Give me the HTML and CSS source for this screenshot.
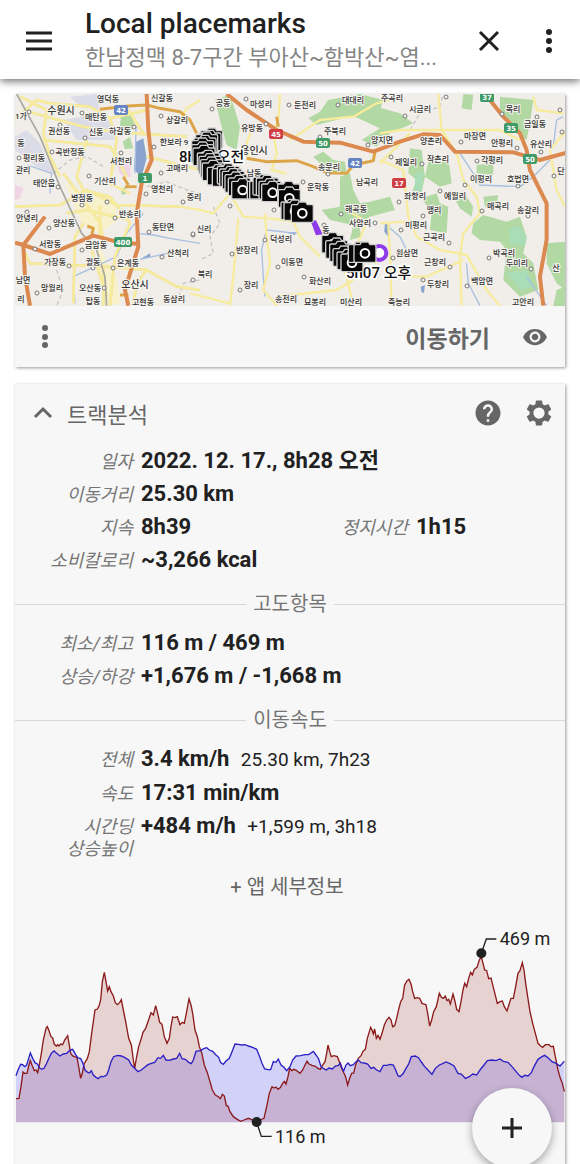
FILE: index.html
```html
<!DOCTYPE html>
<html lang="ko">
<head>
    <meta charset="UTF-8">
    <meta name="viewport" content="width=device-width, initial-scale=1.0">
    <title>Local placemarks</title>
    <link rel="stylesheet" href="styles.css">
</head>
<body>
    <header class="topbar">
        <button class="icon-btn" aria-label="Menu">
            <svg width="28" height="28" viewBox="0 0 28 28"><path d="M1 6H27M1 14H27M1 22H27" stroke="#212121" stroke-width="3"/></svg>
        </button>
        <div class="titles">
            <h1>Local placemarks</h1>
            <p>한남정맥 8-7구간 부아산~함박산~염...</p>
        </div>
        <button class="icon-btn" aria-label="Close">
            <svg width="28" height="28" viewBox="0 0 28 28"><path d="M5 5L23 23M23 5L5 23" stroke="#212121" stroke-width="3"/></svg>
        </button>
        <button class="icon-btn" aria-label="More">
            <svg width="28" height="28" viewBox="0 0 28 28" fill="#212121"><circle cx="14" cy="5" r="3"/><circle cx="14" cy="14" r="3"/><circle cx="14" cy="23" r="3"/></svg>
        </button>
    </header>

    <main>
        <section class="card">
            <svg class="map" viewBox="15 94 550 212" role="img" aria-label="Map">
                <defs>
                    <g id="camera">
                        <path d="M-33-22Q-33-26-29-26H-15L-10-34H10L15-26H29Q33-26 33-22V23Q33 27 29 27H-29Q-33 27-33 23Z" fill="#080808" stroke="#d0d0d0" stroke-width="4"/>
                        <circle r="13" fill="none" stroke="#fff" stroke-width="6"/>
                    </g>
                </defs>
                <rect x="15" y="94" width="550" height="212" fill="#f1eeea"/>
                <!-- drawn at three units per pixel -->
                <g transform="translate(0 90) scale(.3333)">
                    <g fill="#dcdce8">
                        <path d="M45 140L80 120L120 160L160 250L110 230L45 180Z"/>
                        <path d="M190 90L300 70L370 130L340 150L230 150Z"/>
                        <path d="M210 20L290 12L300 60L240 50Z"/>
                    </g>
                    <g fill="#f1d3e6">
                        <path d="M350 225L390 215L392 262L362 255Z"/>
                        <path d="M45 285L70 295L60 325L45 330Z"/>
                    </g>
                    <g fill="#f8f2cc">
                        <path d="M195 280L235 300L300 310L345 330L350 390L300 430L245 400L225 350Z"/>
                        <path d="M290 440L320 520L350 560L360 640L320 647L300 550Z"/>
                    </g>
                    <g fill="#b2d9a4">
                        <path d="M365 55L395 70L405 110L375 135L360 105Z"/>
                        <path d="M368 155L390 140L400 175L375 178Z"/>
                        <path d="M362 298L376 290L380 310L366 316Z"/>
                        <path d="M645 30L690 14L705 60L720 110L710 180L680 165L665 110Z"/>
                        <path d="M985 30L1080 12L1150 30L1140 60L1030 85L950 105L925 85L960 65Z"/>
                        <path d="M1020 60L1090 40L1200 70L1240 100L1170 130L1130 170L1085 150L1140 115Z"/>
                        <path d="M940 200L970 185L1000 210L1035 215L1040 255L990 250L965 225Z"/>
                        <path d="M1020 260L1050 250L1060 300L1080 340L1110 335L1170 320L1185 360L1110 380L1075 400L1085 440L1050 450L1060 405L990 390L965 360L1020 350Z"/>
                        <path d="M1140 330L1170 325L1165 345L1140 355Z"/>
                        <path d="M1230 175L1265 180L1275 260L1260 330L1235 310L1250 270L1225 250Z"/>
                        <path d="M1290 195L1345 200L1355 280L1320 290L1275 260Z"/>
                        <path d="M1265 325L1310 310L1320 340L1345 350L1340 430L1290 420L1295 370Z"/>
                        <path d="M1355 310L1390 305L1420 350L1415 380L1380 355Z"/>
                        <path d="M1390 12L1420 14L1415 60L1385 55Z"/>
                        <path d="M1500 20L1600 30L1590 100L1580 150L1550 130L1530 100L1500 60Z"/>
                        <path d="M1430 225L1480 220L1480 255L1430 250Z"/>
                        <path d="M1420 400L1450 375L1520 395L1560 380L1580 440L1570 490L1600 520L1615 600L1560 620L1510 570L1520 480L1500 455L1440 450L1415 430Z"/>
                        <path d="M1450 320L1495 315L1490 350L1455 350Z"/>
                        <path d="M1640 460L1695 455V600L1670 580L1640 520Z"/>
                        <path d="M1670 600L1695 590V648H1660Z"/>
                    </g>
                    <g fill="#a9ddb8">
                        <path d="M1530 420Q1550 390 1580 440L1575 470L1530 460Z"/>
                        <path d="M1245 250L1270 245L1265 310L1245 310Z"/>
                        <path d="M1520 550L1580 540L1600 590L1560 600Z"/>
                    </g>
                    <g fill="#89a5cf">
                        <path d="M408 155L430 145L440 205L425 260L402 240Z"/>
                        <path d="M420 508L450 490L452 500Z"/>
                        <path d="M1155 400L1170 405L1165 440L1153 425Z"/>
                        <path d="M1262 590L1275 585L1272 610L1264 605Z"/>
                        <path d="M860 428L890 426L885 435Z"/>
                    </g>
                    <g class="water">
                        <path d="M82 225L155 250L150 310"/>
                        <path d="M408 110L405 250M430 370L380 430L350 500L220 560L225 640"/>
                        <path d="M410 430L460 435L510 445L600 460M420 508L550 480"/>
                        <path d="M800 415L785 480L790 560L795 620M800 420L890 430"/>
                        <path d="M1165 410L1200 440L1230 500M1380 190L1420 250L1440 285L1560 290L1600 260L1650 210M1660 170L1670 90L1690 80"/>
                        <path d="M1400 520L1405 580L1440 647M1580 560L1640 647"/>
                    </g>
                    <g class="border">
                        <path d="M160 250L210 210L260 200L310 230M440 290L500 275L560 300L600 310M640 350L660 400L630 440L640 490L600 510M530 640L550 580L600 570M170 540L190 600L170 647M1230 120L1260 70L1320 50L1330 12"/>
                    </g>
                    <g class="road-casing">
                        <path d="M45 90L110 30L150 40L270 50L330 85L440 60M60 20L140 60L130 130L150 200L180 260M85 65L250 110L300 120L400 130L560 140"/>
                        <path d="M130 150L330 170L350 200L380 260M260 150L230 260L250 300L330 320M330 85L350 150L330 280L390 310"/>
                        <path d="M45 350L180 345L260 300L350 345L540 350M190 250L250 330L300 400L310 450M200 370L260 360L390 390M300 345L300 440M330 320L390 400L345 500L330 647"/>
                        <path d="M220 640L225 440L250 400M70 480L90 520L320 530L440 540L530 590L600 600M310 530L310 647M265 450L320 620"/>
                        <path d="M385 60L410 100L430 130M440 200L520 220L600 240M400 640L410 580L440 540"/>
                    </g>
                    <g class="road-yellow">
                        <path d="M45 90L110 30L150 40L270 50L330 85L440 60M60 20L140 60L130 130L150 200L180 260M85 65L250 110L300 120L400 130L560 140"/>
                        <path d="M130 150L330 170L350 200L380 260M260 150L230 260L250 300L330 320M330 85L350 150L330 280L390 310"/>
                        <path d="M45 350L180 345L260 300L350 345L540 350M190 250L250 330L300 400L310 450M200 370L260 360L390 390M300 345L300 440M330 320L390 400L345 500L330 647"/>
                        <path d="M220 640L225 440L250 400M70 480L90 520L320 530L440 540L530 590L600 600M310 530L310 647M265 450L320 620"/>
                        <path d="M385 60L410 100L430 130M440 200L520 220L600 240M400 640L410 580L440 540"/>
                        <path d="M840 12L835 90L820 130L830 190L815 240L860 250M760 105L740 160L745 200M870 150L960 90L1060 80L1130 40L1210 20M690 310L730 380L810 385L880 395L900 440L960 500M715 385L700 560L690 647M795 370L800 440L810 520L790 600L830 647M830 620L1010 600L1060 570M690 640L570 610"/>
                        <path d="M1040 360L1100 395L1070 470L1130 520M1140 210L1210 240L1225 380L1250 440L1320 480L1400 495L1460 600L1500 647M1380 500L1385 647M1170 560L1280 560L1390 510M1315 12L1325 120L1370 190L1390 270L1430 320L1440 370L1390 430L1380 500M1140 130L1200 120L1500 120L1560 150M1165 400L1170 490L1175 647M1140 220L1230 130M1700 120L1650 180L1670 300L1695 350M1600 20L1610 60L1690 70M1140 400L1215 395"/>
                        <path d="M540 350L600 360L640 370L690 310M600 30L560 55L540 90M1010 500L1040 560L1060 647"/>
                    </g>
                    <path d="M50 12L120 140L180 290L245 430L290 480L315 560L320 647" class="rail"/>
                    <g class="road-amber">
                        <path d="M300 58L385 48L440 45L480 55L540 65L570 90L590 130M740 205L800 215L890 212L940 230L980 248L1040 250L1060 225L1120 212L1125 185M830 80L835 110M375 290H410M262 408L280 415L275 435M370 260L385 285M360 615H385"/>
                    </g>
                    <g class="road-orange">
                        <path d="M440 12L445 120L455 210L425 280L410 370L415 470L390 550L375 600L385 647"/>
                        <path d="M45 458L70 465L150 492L280 437L350 455L415 462M70 465L135 380M70 465L75 560L90 647"/>
                        <path d="M680 12L740 60L830 120L910 155L1020 158L1120 185L1200 155L1270 133L1320 135L1365 185L1540 187L1620 210L1700 188"/>
                        <path d="M1470 30L1510 80L1560 130L1580 180L1590 240L1640 340L1640 450L1620 560L1630 647"/>
                    </g>
                </g>
                <g id="places" class="places"></g>
                <g id="shields" class="shields"></g>
                <text x="179" y="162" class="stamp">8h28 오전</text>
                <text x="346" y="278" class="stamp">5h07 오후</text>
                <g transform="translate(190 90) scale(.3333)">
                    <path d="M362 393L378 391L398 433L378 436Z" fill="#8e3bea"/>
                    <circle cx="568" cy="489" r="21" fill="#fff" stroke="#8e3bea" stroke-width="12"/>
                </g>
                <g id="photos" transform="translate(190 90) scale(.3333)"></g>
            </svg>
            <div class="card-actions">
                <button class="icon-btn" aria-label="More">
                    <svg width="28" height="28" viewBox="0 0 28 28" fill="#666"><circle cx="14" cy="5" r="3"/><circle cx="14" cy="14" r="3"/><circle cx="14" cy="22" r="3"/></svg>
                </button>
                <button class="go-btn">이동하기</button>
                <button class="icon-btn" aria-label="Show">
                    <svg width="26" height="26" viewBox="0 0 24 24" fill="#666"><path d="M12 4.500C7 4.500 2.730 7.610 1 12c1.730 4.390 6 7.500 11 7.500s9.270-3.110 11-7.500c-1.730-4.390-6-7.500-11-7.500zM12 17c-2.760 0-5-2.240-5-5s2.240-5 5-5 5 2.240 5 5-2.240 5-5 5zm0-8c-1.660 0-3 1.340-3 3s1.340 3 3 3 3-1.340 3-3-1.340-3-3-3z"/></svg>
                </button>
            </div>
        </section>

        <section class="card analysis">
            <div class="card-head">
                <button class="collapse-btn">
                    <svg width="20" height="20" viewBox="0 0 20 20"><path d="M2 14L10 6L18 14" fill="none" stroke="#666" stroke-width="3"/></svg>
                    트랙분석
                </button>
                <button class="icon-btn" aria-label="Help">
                    <svg width="30" height="30" viewBox="0 0 24 24" fill="#666"><path d="M12 2C6.480 2 2 6.480 2 12s4.480 10 10 10 10-4.480 10-10S17.520 2 12 2zm1 17h-2v-2h2v2zm2.070-7.750l-.9.920C13.450 12.900 13 13.500 13 15h-2v-.5c0-1.100.45-2.100 1.170-2.830l1.240-1.260c.37-.36.59-.86.59-1.410 0-1.100-.9-2-2-2s-2 .9-2 2H8c0-2.210 1.790-4 4-4s4 1.790 4 4c0 .88-.36 1.680-.93 2.250z"/></svg>
                </button>
                <button class="icon-btn" aria-label="Settings">
                    <svg width="30" height="30" viewBox="0 0 24 24" fill="#666"><path fill-rule="evenodd" d="M19.430 12.980c.04-.32.07-.64.07-.98s-.03-.66-.07-.98l2.110-1.650c.19-.15.24-.42.12-.64l-2-3.460c-.12-.22-.39-.3-.61-.22l-2.490 1c-.52-.4-1.080-.73-1.690-.98l-.38-2.650C14.460 2.180 14.250 2 14 2h-4c-.25 0-.46.18-.49.420l-.38 2.650c-.61.25-1.170.59-1.690.98l-2.490-1c-.23-.09-.49 0-.61.220l-2 3.460c-.13.22-.07.49.12.640l2.110 1.650c-.04.32-.07.65-.07.980s.03.66.07.980l-2.110 1.650c-.19.15-.24.42-.12.640l2 3.460c.12.22.39.3.61.220l2.490-1c.52.4 1.080.73 1.690.98l.38 2.650c.03.24.24.42.49.420h4c.25 0 .46-.18.49-.420l.38-2.650c.61-.25 1.170-.59 1.690-.98l2.490 1c.23.09.49 0 .61-.220l2-3.460c.12-.22.07-.49-.12-.640l-2.110-1.650zM12 16.500a4.500 4.500 0 1 1 0-9 4.500 4.500 0 0 1 0 9z"/></svg>
                </button>
            </div>

            <dl class="stats">
                <div class="wide"><dt>일자</dt><dd>2022. 12. 17., 8h28 오전</dd></div>
                <div class="wide"><dt>이동거리</dt><dd>25.30 km</dd></div>
                <div><dt>지속</dt><dd>8h39</dd></div>
                <div><dt>정지시간</dt><dd>1h15</dd></div>
                <div class="wide"><dt>소비칼로리</dt><dd>~3,266 kcal</dd></div>
            </dl>

            <h2 class="divider">고도항목</h2>
            <dl class="stats">
                <div class="wide"><dt>최소/최고</dt><dd>116 m / 469 m</dd></div>
                <div class="wide"><dt>상승/하강</dt><dd>+1,676 m / -1,668 m</dd></div>
            </dl>

            <h2 class="divider">이동속도</h2>
            <dl class="stats">
                <div class="wide"><dt>전체</dt><dd>3.4 km/h <small>25.30 km, 7h23</small></dd></div>
                <div class="wide"><dt>속도</dt><dd>17:31 min/km</dd></div>
                <div class="wide"><dt>시간딩<br>상승높이</dt><dd>+484 m/h <small>+1,599 m, 3h18</small></dd></div>
            </dl>

            <button class="details-btn">+ 앱 세부정보</button>

            <svg class="chart" viewBox="45 0 1650 762" role="img" aria-label="Elevation and speed">
                <path id="speedArea" fill="#0000ff" fill-opacity=".15"/>
                <path id="elevationArea" fill="#8b0000" fill-opacity=".15"/>
                <path id="elevationLine" fill="none" stroke="#8b1a1a" stroke-width="4"/>
                <path id="speedLine" fill="none" stroke="#2a1fc4" stroke-width="4"/>
                <path d="M1444 130L1459 87H1489M770 636L784 679H815" fill="none" stroke="#212121" stroke-width="4"/>
                <circle cx="1444" cy="130" r="15" fill="#212121"/>
                <circle cx="770" cy="636" r="15" fill="#212121"/>
                <text x="1499" y="106">469 m</text>
                <text x="825" y="698">116 m</text>
            </svg>
        </section>
    </main>

    <button class="fab" aria-label="Add">
        <svg width="24" height="24" viewBox="0 0 24 24"><path d="M12 2V22M2 12H22" stroke="#212121" stroke-width="3"/></svg>
    </button>

    <script src="script.js"></script>
</body>
</html>
```
FILE: styles.css
```css
* {
    box-sizing: border-box;
}
body {
    margin: 0;
    min-height: 100vh;
    display: flex;
    flex-direction: column;
    background-color: #ffffff;
    color: #212121;
    font-family: Roboto, "Noto Sans CJK KR", sans-serif;
}
button {
    padding: 0;
    border: none;
    background: none;
    color: #666666;
    font-family: inherit;
    cursor: pointer;
}
h1, h2, p, dl, dd {
    margin: 0;
}
.topbar {
    display: flex;
    align-items: center;
    height: 79px;
    padding: 2px 17px 0 25px;
    background-color: #ffffff;
    box-shadow: 0 2px 8px rgba(0, 0, 0, 0.6);
}
.icon-btn {
    display: flex;
    flex-shrink: 0;
}
.titles {
    flex: 1;
    min-width: 0;
    margin-left: 32px;
}
.titles h1 {
    font-size: 28px;
    font-weight: 500;
    line-height: 34px;
}
.titles p {
    overflow: hidden;
    white-space: nowrap;
    text-overflow: ellipsis;
    color: #858585;
    font-size: 22px;
    line-height: 33px;
}
.topbar .icon-btn + .icon-btn {
    margin-left: 32px;
}
main {
    flex: 1;
    display: flex;
    flex-direction: column;
    gap: 17px;
    padding: 15px 15px 0;
}
.card {
    background-color: #f7f7f7;
    box-shadow: 1px 1px 3px rgba(0, 0, 0, 0.4);
}
.analysis {
    flex: 1;
}

/* map */
.map {
    display: block;
    width: 100%;
}
.map path {
    stroke-linejoin: round;
}
.water path {
    fill: none;
    stroke: #a9bfe0;
    stroke-width: 4;
}
.border path {
    fill: none;
    stroke: #c9c5c5;
    stroke-width: 4;
    stroke-dasharray: 12 8;
}
.road-casing path {
    fill: none;
    stroke: #e9dc92;
    stroke-width: 8;
}
.road-yellow path {
    fill: none;
    stroke: #f7eb9d;
    stroke-width: 7;
}
.rail {
    fill: none;
    stroke: #a8a8a0;
    stroke-width: 5;
}
.road-amber path {
    fill: none;
    stroke: #dda54a;
    stroke-width: 9;
}
.road-orange path {
    fill: none;
    stroke: #dc8950;
    stroke-width: 12;
}
.places text {
    fill: #333333;
    stroke: #f6f4f0;
    stroke-width: 2px;
    paint-order: stroke;
    font-size: 8px;
    font-weight: 500;
    text-anchor: middle;
}
.places .city {
    font-size: 10px;
}
.places circle {
    fill: #f6f4f0;
    stroke: #777777;
    stroke-width: 1px;
}
.shields text {
    fill: #ffffff;
    font-family: "DejaVu Sans", sans-serif;
    font-size: 7px;
    font-weight: bold;
    text-anchor: middle;
}
.stamp {
    fill: #111111;
    stroke: #ffffff;
    stroke-width: 3px;
    paint-order: stroke;
    font-size: 15px;
    font-weight: 500;
}

.card-actions {
    display: flex;
    align-items: center;
    height: 61px;
    padding: 0 17px 0 16px;
}
.go-btn {
    margin: 0 32px 0 auto;
    font-size: 23px;
    font-weight: bold;
}

/* track analysis */
.card-head {
    display: flex;
    align-items: center;
    gap: 21px;
    height: 58px;
    margin-bottom: 2px;
    padding: 0 11px 0 18px;
}
.collapse-btn {
    display: flex;
    align-items: center;
    gap: 14px;
    margin-right: auto;
    font-size: 22px;
}
.stats {
    display: grid;
    grid-template-columns: 1fr 1fr;
}
.stats div {
    display: flex;
    align-items: baseline;
    gap: 8px;
}
.stats .wide {
    grid-column: 1 / -1;
}
.stats dt {
    width: 118px;
    color: #757575;
    font-size: 18px;
    font-style: italic;
    line-height: 22px;
    text-align: right;
}
.stats dd {
    font-size: 22px;
    font-weight: bold;
    line-height: 33px;
}
.stats small {
    margin-left: 6px;
    font-size: 19px;
    font-weight: normal;
}
.divider {
    display: flex;
    align-items: center;
    gap: 7px;
    margin: 14px 0 8px;
    color: #757575;
    font-size: 20px;
    font-weight: normal;
    line-height: 28px;
}
.divider::before,
.divider::after {
    content: "";
    flex: 1;
    height: 1px;
    background-color: #d8d8d8;
}
.details-btn {
    display: block;
    width: 100%;
    height: 50px;
    padding-right: 6px;
    font-size: 20px;
}
.chart {
    display: block;
    width: 100%;
}
.chart text {
    fill: #212121;
    font-size: 54px;
}
.fab {
    position: fixed;
    right: 28px;
    bottom: -4px;
    display: flex;
    align-items: center;
    justify-content: center;
    width: 80px;
    height: 80px;
    border-radius: 50%;
    background-color: #f7f7f7;
    box-shadow: 0 3px 8px rgba(0, 0, 0, 0.35);
}
```
FILE: script.js
```js
const SVG_NS = 'http://www.w3.org/2000/svg';

function add(parent, tag, attrs, text) {
    const el = document.createElementNS(SVG_NS, tag);
    for (const key in attrs) el.setAttribute(key, attrs[key]);
    if (text) el.textContent = text;
    parent.appendChild(el);
}

// name, x, baseline
const places = [
    ['영덕동', 108, 102], ['신갈동', 162, 101], ['매탄동', 96, 120], ['권선동', 59, 134],
    ['신동', 96, 135], ['하갈동', 120, 134], ['상갈리', 177, 123], ['한보라 9', 174, 145],
    ['동', 21, 146], ['곡반정동', 70, 155], ['평리동', 34, 161], ['관리', 23, 173],
    ['1가', 21, 119], ['서천리', 121, 164], ['기산리', 105, 184], ['태안읍', 44, 186],
    ['영천리', 162, 192], ['병점동', 82, 201], ['고매리', 177, 171], ['중리', 194, 200],
    ['반송리', 130, 217], ['안녕리', 27, 221], ['양산동', 64, 226], ['동탄면', 163, 230],
    ['서랑동', 50, 247], ['금암동', 96, 248], ['산척리', 178, 256], ['가장동', 55, 265],
    ['궐동', 93, 265], ['은계동', 128, 266], ['남면', 23, 283], ['망월리', 52, 291],
    ['오산동', 90, 291], ['탑동', 93, 304], ['고현동', 143, 305], ['동삼리', 174, 302],
    ['리', 21, 302], ['공동', 223, 106], ['마성리', 261, 107], ['둔전리', 305, 108],
    ['대대리', 353, 103], ['주곡리', 392, 101], ['유방동', 252, 131], ['주북리', 335, 134],
    ['양지면', 382, 143], ['송문리', 329, 170], ['남동', 254, 176], ['운학동', 318, 190],
    ['남곡리', 367, 185], ['해곡동', 356, 212], ['사암리', 360, 226], ['신리', 204, 232],
    ['덕성리', 281, 242], ['동', 326, 233], ['반장리', 247, 253], ['이동면', 292, 265],
    ['북리', 205, 277], ['화산리', 320, 284], ['장리', 251, 288], ['송전리', 286, 302],
    ['묘봉리', 315, 305], ['미산리', 351, 305], ['시금리', 420, 112], ['목리', 513, 112],
    ['금일동', 535, 127], ['마장면', 475, 139], ['안평리', 502, 146], ['유산리', 541, 147],
    ['양촌리', 431, 144], ['제일리', 406, 165], ['작촌리', 438, 162], ['각평리', 492, 163],
    ['이평리', 481, 182], ['호법면', 518, 182], ['단', 561, 174], ['좌항리', 415, 199],
    ['예월리', 455, 199], ['맹리', 434, 213], ['매곡리', 498, 209], ['송갈리', 528, 213],
    ['미평리', 416, 228], ['근곡리', 434, 240], ['원삼면', 407, 256], ['박곡리', 504, 256],
    ['두미리', 517, 266], ['근창리', 435, 265], ['두창리', 438, 287], ['백암면', 482, 284],
    ['산', 556, 271], ['죽능리', 399, 305], ['고안리', 523, 305]
];
const cities = [['수원시', 61, 114], ['오산시', 135, 288], ['용인시', 254, 154]];
const dots = [
    [29, 112], [82, 113], [161, 116], [60, 125], [85, 138], [134, 127], [154, 147], [52, 152],
    [19, 158], [121, 153], [89, 176], [58, 187], [161, 173], [146, 194], [107, 202], [183, 202],
    [82, 205], [27, 212], [115, 218], [49, 228], [149, 232], [35, 249], [82, 250], [162, 257],
    [69, 266], [93, 268], [113, 268], [193, 235], [193, 280], [37, 293], [104, 288], [212, 109],
    [246, 99], [289, 105], [338, 105], [266, 124], [320, 137], [368, 145], [328, 174], [303, 182],
    [341, 214], [375, 223], [193, 234], [265, 240], [232, 254], [278, 267], [304, 277], [240, 290],
    [324, 225], [230, 206], [274, 210], [446, 97], [405, 116], [502, 114], [537, 117], [461, 142],
    [517, 148], [541, 152], [391, 157], [422, 164], [477, 161], [465, 185], [518, 186], [554, 176],
    [399, 202], [440, 191], [423, 216], [482, 211], [528, 216], [401, 230], [449, 243], [393, 258],
    [489, 258], [531, 269], [450, 267], [423, 280], [467, 286], [560, 110], [562, 132]
];
const placeLayer = document.getElementById('places');
dots.forEach(([x, y]) => add(placeLayer, 'circle', { cx: x, cy: y, r: 2 }));
places.forEach(([name, x, y]) => add(placeLayer, 'text', { x, y }, name));
cities.forEach(([name, x, y]) => add(placeLayer, 'text', { x, y, class: 'city' }, name));

// road numbers: label, x, y, colour
const shields = [
    ['42', 121, 110, '#6484c2'], ['1', 145, 178, '#409a67'], ['400', 123, 242, '#409a67'],
    ['45', 276, 134, '#cf3e45'], ['50', 323, 143, '#409a67'], ['42', 355, 163, '#6484c2'],
    ['17', 399, 183, '#cf3e45'], ['37', 487, 97, '#409a67'], ['35', 511, 128, '#409a67'],
    ['50', 530, 159, '#409a67']
];
const shieldLayer = document.getElementById('shields');
shields.forEach(([label, x, y, fill]) => {
    const width = label.length > 2 ? 18 : 14;
    add(shieldLayer, 'rect', { x: x - width / 2, y: y - 5, width, height: 10, rx: 2, fill });
    add(shieldLayer, 'text', { x, y: y + 3 }, label);
});

// photo markers along the track
const photos = [
    [65, 148], [60, 155], [50, 160], [45, 170], [38, 178], [38, 190], [42, 200], [55, 215],
    [60, 225], [65, 235], [70, 245], [85, 258], [100, 262], [115, 255], [122, 263], [130, 270],
    [138, 280], [148, 290], [158, 300], [205, 300], [212, 300], [222, 288], [232, 290],
    [240, 300], [248, 308], [296, 308], [298, 325], [306, 362], [315, 364], [337, 370],
    [428, 462], [440, 478], [452, 488], [462, 502], [474, 512], [486, 518], [508, 490], [525, 490]
];
const photoLayer = document.getElementById('photos');
photos.forEach(([x, y]) => add(photoLayer, 'use', { href: '#camera', x, y }));

// profile, three units per pixel
const elevation = `48,566 57,565 63,530 69,486 74,490 81,490 86,468 91,452 97,468 103,482 108,480 113,488
118,465 124,430 130,390 138,355 142,350 147,362 153,380 158,384 163,403 169,408 173,404 177,408 182,402
188,404 194,390 203,377 207,400 212,430 218,438 224,440 231,443 236,470 242,505 247,490 252,462 262,446
268,425 275,370 285,300 292,297 297,288 302,270 307,215 313,187 318,215 323,243 328,230 333,245 340,258
346,278 352,284 359,278 364,269 370,300 378,340 386,385 394,405 400,450 404,475 410,440 416,410 424,385
429,367 437,355 444,335 453,308 460,315 467,287 473,310 479,337 486,343 493,380 501,400 508,385 513,350
518,321 525,323 532,320 540,344 547,337 553,340 559,310 567,267 573,285 578,310 585,360 592,380 598,410
605,428 613,465 622,488 630,515 637,540 646,555 655,560 661,566 667,553 673,558 679,587 684,588 690,605
700,620 712,628 722,634 732,630 745,625 758,630 770,636 780,630 792,625 800,590 808,550 816,530 822,534
828,531 834,538 841,533 848,520 853,514 858,522 864,500 869,475 875,482 882,478 890,482 900,490 908,480
915,465 921,454 927,462 936,466 946,469 954,475 961,478 968,465 975,455 980,430 984,405 989,425 994,440
1002,437 1012,440 1018,455 1023,470 1029,484 1036,498 1043,525 1049,505 1055,490 1061,489 1067,465
1075,445 1083,437 1089,424 1096,418 1102,385 1112,352 1116,360 1120,372 1124,357 1129,385 1134,376
1140,388 1146,370 1153,345 1160,330 1167,322 1173,330 1178,350 1184,347 1190,325 1196,298 1202,275
1208,265 1214,225 1221,213 1227,208 1233,222 1238,245 1244,265 1252,263 1259,265 1266,280 1278,284
1283,310 1289,348 1295,330 1301,305 1309,290 1318,250 1324,262 1330,265 1336,258 1341,272 1346,268
1351,282 1359,252 1364,270 1370,298 1377,305 1383,275 1389,240 1394,220 1400,230 1406,205 1412,187
1417,195 1423,178 1431,172 1438,150 1444,140 1449,160 1454,180 1460,182 1466,206 1473,204 1480,232
1487,260 1492,280 1500,275 1507,273 1513,290 1521,303 1528,280 1533,265 1540,265 1546,235 1554,190
1560,182 1567,158 1572,180 1577,220 1583,260 1590,305 1598,340 1606,370 1614,400 1622,408 1628,412
1636,404 1647,404 1653,410 1660,409 1666,440 1674,480 1681,505 1687,520 1693,545`;

const speed = `48,497 54,480 62,463 68,464 74,470 80,465 86,445 91,429 98,445 105,458 112,462 119,474
126,478 132,475 139,462 146,446 154,430 162,423 170,430 180,438 190,432 200,430 210,420 218,418 227,434
234,444 242,446 249,460 255,480 263,487 269,488 274,482 280,495 288,502 295,506 302,499 311,500 320,495
326,480 333,455 341,440 352,436 364,438 375,443 386,450 394,465 404,475 414,485 424,480 434,472 444,464
454,460 464,457 474,443 482,445 490,436 498,450 508,451 520,447 530,445 539,430 546,446 556,448 566,457
574,461 580,450 588,424 600,422 613,415 620,413 628,420 638,424 648,435 656,442 662,458 670,463 678,453
688,445 696,425 705,402 715,403 725,405 735,404 745,408 758,412 770,418 779,440 786,460 794,477 804,479
812,479 820,455 828,457 835,447 843,465 851,471 860,482 870,470 878,450 888,438 902,437 915,434 926,434
940,424 948,435 956,447 963,470 971,476 979,480 987,474 997,477 1006,468 1015,466 1021,459 1026,474
1031,483 1038,465 1044,459 1051,467 1060,464 1068,455 1075,450 1083,458 1093,459 1103,462 1113,475
1121,472 1130,480 1140,485 1150,466 1160,466 1170,463 1180,465 1186,478 1194,497 1200,500 1210,490
1218,475 1226,462 1234,440 1246,438 1256,444 1264,456 1274,470 1284,480 1296,493 1306,475 1318,465
1328,461 1338,456 1350,461 1362,468 1374,490 1384,492 1396,505 1408,500 1418,492 1430,495 1440,480
1452,465 1462,452 1476,450 1488,452 1500,447 1510,454 1524,457 1536,470 1546,482 1558,496 1566,502
1574,496 1584,498 1594,488 1602,470 1614,448 1626,440 1634,436 1644,443 1656,455 1668,460 1680,468
1687,460 1693,454`;

function drawSeries(points, line, area) {
    const d = 'M' + points;
    document.getElementById(line).setAttribute('d', d);
    document.getElementById(area).setAttribute('d', d + 'V637H48Z');
}
drawSeries(elevation, 'elevationLine', 'elevationArea');
drawSeries(speed, 'speedLine', 'speedArea');
```
